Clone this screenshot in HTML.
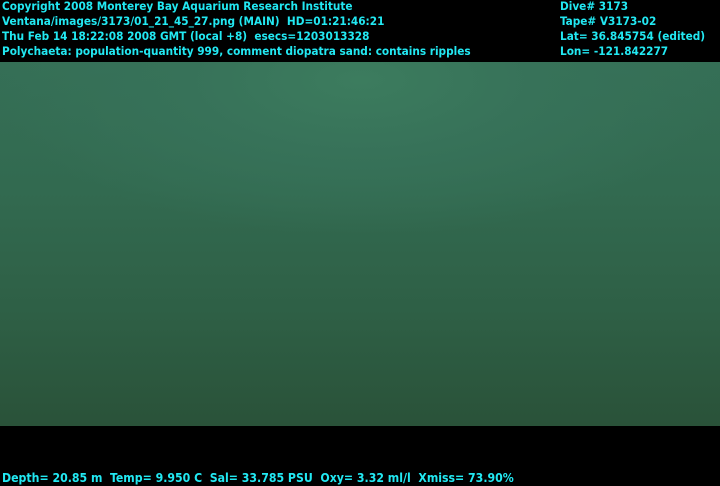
<!DOCTYPE html>
<html><head><meta charset="utf-8"><style>
html,body{margin:0;padding:0;background:#000;}
body{width:720px;height:486px;position:relative;overflow:hidden;font-family:"DejaVu Sans Condensed","DejaVu Sans",sans-serif;font-size:11.7px;color:#22e8f2;font-weight:bold;}
.t{position:absolute;white-space:pre;line-height:15px;}
#img{position:absolute;left:0;top:62px;width:720px;height:364px;
background:radial-gradient(ellipse 60% 50% at 50% 5%, #3c7c5e 0%, #377259 40%, transparent 85%),
linear-gradient(to bottom,#356f56 0%,#326a50 35%,#2e5f45 70%,#2a5239 100%);}
</style></head><body>
<div id="img"></div>
<div class="t" style="left:2px;top:-1px">Copyright 2008 Monterey Bay Aquarium Research Institute
Ventana/images/3173/01_21_45_27.png (MAIN)  HD=01:21:46:21
Thu Feb 14 18:22:08 2008 GMT (local +8)  esecs=1203013328
Polychaeta: population-quantity 999, comment diopatra sand: contains ripples</div>
<div class="t" style="left:560px;top:-1px">Dive# 3173
Tape# V3173-02
Lat= 36.845754 (edited)
Lon= -121.842277</div>
<div class="t" style="left:2px;top:471px;font-size:12.2px">Depth= 20.85 m  Temp= 9.950 C  Sal= 33.785 PSU  Oxy= 3.32 ml/l  Xmiss= 73.90%</div>
</body></html>
